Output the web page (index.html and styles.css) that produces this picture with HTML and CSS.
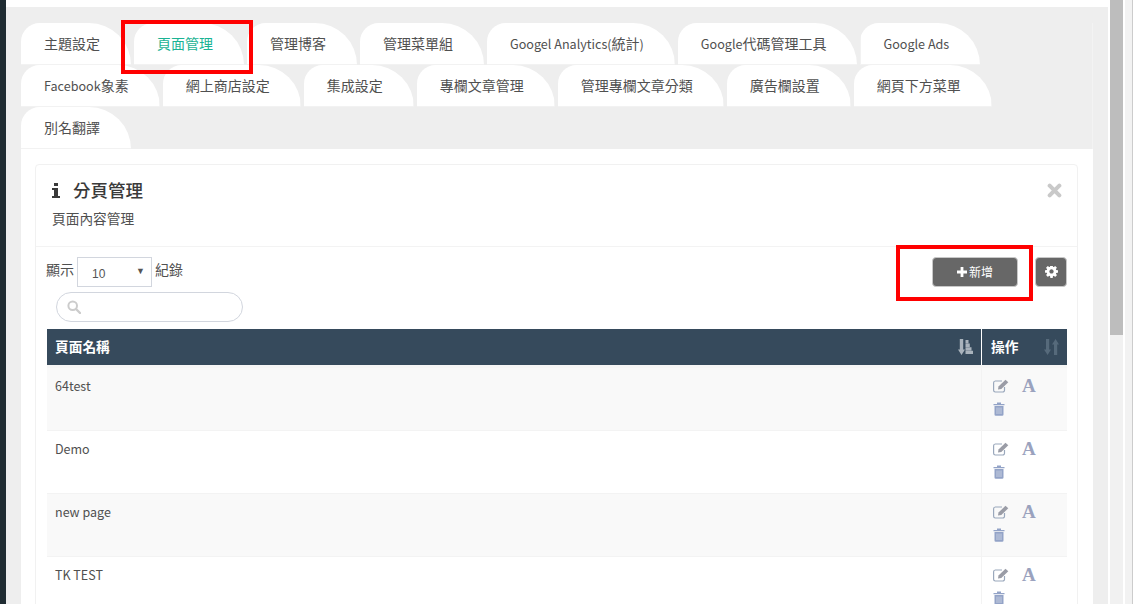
FILE: index.html
```html
<!DOCTYPE html>
<html lang="zh-Hant">
<head>
<meta charset="utf-8">
<title>頁面管理</title>
<link rel="stylesheet" href="styles.css">
</head>
<body>
<svg class="defs" width="0" height="0" aria-hidden="true">
  <symbol id="i-edit" viewBox="0 0 16 14">
    <path d="M11.500 8v3.200A1.800 1.800 0 0 1 9.700 13H2.300A1.800 1.800 0 0 1 .6 11.200V3.800A1.800 1.800 0 0 1 2.300 2H9" fill="none" stroke="currentColor" stroke-width="1.200"/>
    <path d="M5.500 7.500 12.500.8l2.800 2.400-7 6.800-3.300.6z" fill="#9a9ca6"/>
  </symbol>
  <symbol id="i-trash" viewBox="0 0 12 14">
    <path d="M4 2V.6h4V2h3.500v1.300H.5V2zM1.500 4h9v8.500a1.300 1.300 0 0 1-1.300 1.300H2.800a1.300 1.300 0 0 1-1.300-1.300z" fill="currentColor"/>
    <path d="M4 5.500v6.500M6 5.500v6.500M8 5.500v6.500" stroke="#dfe3ee" stroke-width=".7"/>
  </symbol>
</svg>
<div class="sidebar"></div>
<div class="page">
  <div class="topbar"></div>
  <main class="main">
    <nav class="tabs">
      <a class="tab">主題設定</a>
      <a class="tab active">頁面管理</a>
      <a class="tab">管理博客</a>
      <a class="tab">管理菜單組</a>
      <a class="tab"><span class="latin">Googel Analytics(</span>統計<span class="latin">)</span></a>
      <a class="tab"><span class="latin">Google</span>代碼管理工具</a>
      <a class="tab"><span class="latin">Google Ads</span></a>
      <a class="tab"><span class="latin">Facebook</span>象素</a>
      <a class="tab">網上商店設定</a>
      <a class="tab">集成設定</a>
      <a class="tab">專欄文章管理</a>
      <a class="tab">管理專欄文章分類</a>
      <a class="tab">廣告欄設置</a>
      <a class="tab">網頁下方菜單</a>
      <a class="tab">別名翻譯</a>
    </nav>
    <section class="content">
      <div class="panel">
        <header class="panel-head">
          <div class="title-row">
            <svg class="i-info" viewBox="0 0 8 15"><path d="M2 0h4v3H2zM0 5h6v8h2v2H0v-2h2V7H0z" fill="currentColor"/></svg>
            <h2 class="title">分頁管理</h2>
            <svg class="i-close" viewBox="0 0 14 14"><path d="M2.500 2.500l9 9M11.500 2.500l-9 9" stroke="currentColor" stroke-width="3.800" stroke-linecap="round" fill="none"/></svg>
          </div>
          <p class="subtitle">頁面內容管理</p>
        </header>
        <div class="toolbar">
          <div class="filters">
            <div class="length">
              <span>顯示</span>
              <div class="select"><span>10</span><i class="caret">▼</i></div>
              <span>紀錄</span>
            </div>
            <div class="search">
              <svg viewBox="0 0 14 14"><circle cx="5.700" cy="5.700" r="4.300" fill="none" stroke="currentColor" stroke-width="2"/><path d="M9 9l4 4" stroke="currentColor" stroke-width="2.400" stroke-linecap="round"/></svg>
            </div>
          </div>
          <div class="actions">
            <button class="btn btn-add"><svg viewBox="0 0 10 10"><path d="M3.600 0h2.800v3.600H10v2.800H6.400V10H3.600V6.400H0V3.600h3.600z" fill="currentColor"/></svg>新增</button>
            <button class="btn btn-gear"><svg viewBox="0 0 1536 1536"><path fill="currentColor" d="M1024 640q0-106-75-181t-181-75-181 75-75 181 75 181 181 75 181-75 75-181zm512-109v222q0 12-8 23t-20 13l-185 28q-19 54-39 91 35 50 107 138 10 12 10 25t-9 23q-27 37-99 108t-94 71q-12 0-26-9l-138-108q-44 23-91 38-16 136-29 186-7 28-36 28h-222q-14 0-24.500-8.500t-11.500-21.500l-28-184q-49-16-90-37l-141 107q-10 9-25 9-14 0-25-11-126-114-165-168-7-10-7-23 0-12 8-23 15-21 51-66.500t54-70.500q-27-50-41-99l-183-27q-13-2-21-12.500t-8-23.500v-222q0-12 8-23t19-13l186-28q14-46 39-92-40-57-107-138-10-12-10-24 0-10 9-23 26-36 98.500-107.500t94.500-71.500q13 0 26 10l138 107q44-23 91-38 16-136 29-186 7-28 36-28h222q14 0 24.500 8.500t11.500 21.500l28 184q49 16 90 37l142-107q9-9 24-9 13 0 25 10 129 119 165 170 7 8 7 22 0 12-8 23-15 21-51 66.500t-54 70.500q26 50 41 98l183 28q13 2 21 12.500t8 23.500z"/></svg></button>
          </div>
        </div>
        <div class="table">
          <div class="thead">
            <div class="th th-name">頁面名稱
              <svg class="sort sort-on" viewBox="0 0 15 16"><path d="M1.800 0h3.400v10.500h1.800L3.500 16 0 10.500h1.800zM7.500 1h3v3.300h-3zM7.500 4.600h4.300v3.300H7.500zM7.500 8.200h6v3.300h-6zM7.500 11.800H15v3.300H7.500z" fill="currentColor"/></svg>
            </div>
            <div class="th th-ops">操作
              <svg class="sort sort-off" viewBox="0 0 15 16"><path d="M2 0h3.200v10.500H7L3.600 16 0 10.500h2zM10 16h3.200V5.500H15L11.600 0 8 5.500h2z" fill="currentColor"/></svg>
            </div>
          </div>
          <div class="row odd">
            <div class="td-name">64test</div>
            <div class="td-ops"><svg class="i-edit"><use href="#i-edit"/></svg><b class="i-font">A</b><svg class="i-trash"><use href="#i-trash"/></svg></div>
          </div>
          <div class="row">
            <div class="td-name">Demo</div>
            <div class="td-ops"><svg class="i-edit"><use href="#i-edit"/></svg><b class="i-font">A</b><svg class="i-trash"><use href="#i-trash"/></svg></div>
          </div>
          <div class="row odd">
            <div class="td-name">new page</div>
            <div class="td-ops"><svg class="i-edit"><use href="#i-edit"/></svg><b class="i-font">A</b><svg class="i-trash"><use href="#i-trash"/></svg></div>
          </div>
          <div class="row">
            <div class="td-name">TK TEST</div>
            <div class="td-ops"><svg class="i-edit"><use href="#i-edit"/></svg><b class="i-font">A</b><svg class="i-trash"><use href="#i-trash"/></svg></div>
          </div>
        </div>
      </div>
    </section>
  </main>
</div>
<div class="scrollbar"><div class="thumb"></div></div>
<div class="edge"></div>
<div class="mark mark-tab"></div>
<div class="mark mark-add"></div>
</body>
</html>
```

FILE: styles.css
```css
* { box-sizing: border-box; }
html, body { height: 100%; margin: 0; overflow: hidden; }
body {
  display: flex;
  position: relative;
  background: #fff;
  color: #505050;
  font: 14px/20px "Noto Sans CJK TC", "Noto Sans", sans-serif;
}
.defs { position: absolute; }
.latin { font-size: 12.600px; }
.sidebar { flex: 0 0 6px; background: #1f2c32; }
.page { flex: 0 0 1102px; display: flex; flex-direction: column; height: 604px; overflow: hidden; }
.topbar { flex: 0 0 7px; background: #fff; }
.main { flex: 1; background: #eee; padding: 16px 15px 0; }

.tabs { display: flex; flex-wrap: wrap; width: 1072px; gap: 0 3px; border-right: 1px solid #f3f3f3; }
.tab {
  height: 42px;
  padding: 10px 31px 0 23px;
  background: #fff;
  border-bottom: 1px solid #f2f2f2;
  border-radius: 20px 45px 0 0;
  color: #505050;
  white-space: nowrap;
  line-height: 20px;
}
.tab.active { color: #1ab394; }

.content { width: 1072px; height: 455px; background: #fff; padding: 15px 15px 0 14px; }
.panel { border: 1px solid #f1f1f1; border-radius: 4px; height: 460px; }
.panel-head { height: 82px; padding: 13px 15px 0 16px; border-bottom: 1px solid #f3f3f3; }
.title-row { display: flex; align-items: center; height: 24px; }
.i-info { width: 8px; height: 15px; color: #3a3a3a; margin-right: 13px; }
.title { margin: 0; flex: 1; font-size: 17.500px; font-weight: 500; line-height: 24px; color: #3a3a3a; }
.i-close { width: 15px; height: 15px; color: #c9c9c9; }
.subtitle { margin: 6px 0 0; font-size: 13.700px; line-height: 20px; color: #505050; }

.toolbar { display: flex; justify-content: space-between; padding: 10px 10px 0 10px; height: 82px; }
.length { display: flex; align-items: flex-start; gap: 3px; height: 30px; line-height: 24px; }
.select {
  display: flex;
  justify-content: space-between;
  width: 75px;
  height: 30px;
  padding: 0 6px 0 14px;
  border: 1px solid #d2d6de;
  font: 12px/33px "Liberation Sans", sans-serif;
  color: #555;
}
.caret { font-style: normal; font-size: 9px; line-height: 27px; color: #555; }
.search {
  display: flex;
  align-items: center;
  width: 187px;
  height: 30px;
  margin: 5px 0 0 10px;
  padding-left: 10px;
  border: 1px solid #d2d6de;
  border-radius: 15px;
}
.search svg { width: 14px; height: 14px; color: #ccc; }
.actions { display: flex; gap: 17px; }
.btn {
  display: flex;
  align-items: center;
  justify-content: center;
  height: 30px;
  border: 1px solid #c8c8c8;
  border-radius: 4px;
  background: #676767;
  color: #fff;
  font: 12px/16px "Noto Sans CJK TC", sans-serif;
}
.btn-add { width: 86px; gap: 2px; }
.btn-add svg { width: 10px; height: 10px; }
.btn-gear { width: 32px; }
.btn-gear svg { width: 13px; height: 13px; }

.table { margin: 0 10px 0 11px; }
.thead { display: flex; height: 39px; border-bottom: 3px solid #f6f6f6; background: #364a5c; color: #fff; font-weight: 700; font-size: 13.700px; }
.th { display: flex; align-items: center; justify-content: space-between; padding: 0 8px 2px; }
.th-name { flex: 1; }
.th-ops { flex: 0 0 86px; border-left: 1px solid #fff; padding-left: 9px; }
.sort { width: 15px; height: 16px; margin-top: 2px; }
.sort-on { color: #a9b3bc; }
.sort-off { color: #566a7b; }
.row { display: flex; height: 63px; border-bottom: 1px solid #f3f3f3; font-size: 12.500px; color: #505050; }
.row.odd { background: #f9f9f9; }
.td-name { flex: 1; padding: 8px; line-height: 20px; }
.td-ops {
  flex: 0 0 86px;
  display: flex;
  flex-wrap: wrap;
  align-content: flex-start;
  align-items: center;
  padding: 8px 10px 0 11px;
  border-left: 1px solid #f3f3f3;
}
.i-edit { width: 16px; height: 14px; color: #9aa8bc; }
.i-font { margin-left: 13px; width: 30px; font: 700 19px/20px "Liberation Serif", serif; color: #9aa2be; }
.i-trash { width: 12px; height: 14px; margin-top: 6px; color: #93a3c7; }

.scrollbar { position: absolute; left: 1110px; top: 0; width: 13px; height: 604px; background: #f1f1f1; }
.thumb { height: 335px; background: #bdbdbd; }
.edge { position: absolute; left: 1125px; top: 0; width: 8px; height: 604px; background: #f2f2f2; border-right: 1px solid #ccc; }
.mark { position: absolute; border: 4px solid #f00; }
.mark-tab { left: 121px; top: 20px; width: 132px; height: 54px; }
.mark-add { left: 896px; top: 245px; width: 137px; height: 56px; }
```
